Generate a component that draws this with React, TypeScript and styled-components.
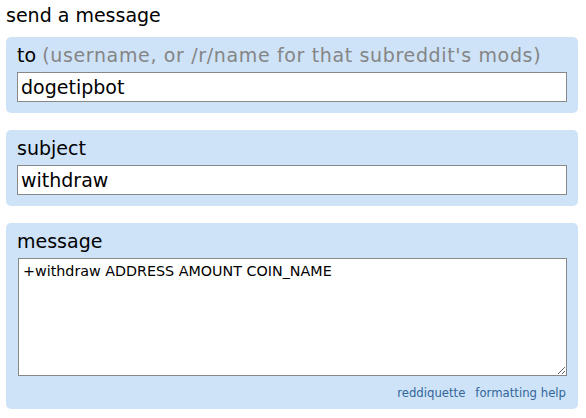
import React from "react";
import styled, { createGlobalStyle } from "styled-components";

const GlobalStyle = createGlobalStyle`
  html, body {
    margin: 0;
    padding: 0;
    background: #ffffff;
  }
  body {
    font-family: "DejaVu Sans", Verdana, sans-serif;
    color: #000;
  }
`;

const Page = styled.div`
  width: 572px;
  margin-left: 6px;
  padding-top: 4px;
  display: flex;
  flex-direction: column;
`;

const Title = styled.h1`
  margin: 0 0 10px 0;
  font-size: 19px;
  line-height: 23px;
  font-weight: normal;
  color: #000;
`;

const Form = styled.div`
  display: flex;
  flex-direction: column;
  gap: 17px;
`;

const RoundField = styled.div<{ $padBottom?: number }>`
  background: #cee3f8;
  border-radius: 5px;
  padding: 7px 12px ${(p) => p.$padBottom ?? 11}px 11px;
  display: flex;
  flex-direction: column;
`;

const FieldTitle = styled.div`
  font-size: 19px;
  line-height: 23px;
  margin-bottom: 5px;
  color: #000;
  white-space: nowrap;
`;

const Hint = styled.span`
  color: #858585;
  letter-spacing: 0.65px;
`;

const TextInput = styled.input`
  box-sizing: border-box;
  width: 550px;
  height: 30px;
  margin: 0;
  border: 1px solid #888888;
  padding: 0 3px;
  font-family: "DejaVu Sans", Verdana, sans-serif;
  font-size: 19px;
  color: #000;
  background: #fff;
  outline: none;
`;

const MessageArea = styled.textarea`
  box-sizing: border-box;
  width: 549px;
  height: 118px;
  margin: 0 0 0 1px;
  border: 1px solid #888888;
  padding: 4px 4px;
  font-family: "DejaVu Sans", Verdana, sans-serif;
  font-size: 14.3px;
  line-height: 16px;
  color: #000;
  background: #fff;
  outline: none;
  display: block;
`;

const LinkRow = styled.div`
  display: flex;
  justify-content: flex-end;
  gap: 10px;
  margin-top: 10px;
  font-size: 11.7px;
  line-height: 14px;
`;

const HelpLink = styled.a`
  color: #369;
  text-decoration: none;
`;

export default function App() {
  return (
    <>
      <GlobalStyle />
      <Page>
        <Title>send a message</Title>
        <Form>
          <RoundField>
            <FieldTitle>
              to <Hint>(username, or /r/name for that subreddit's mods)</Hint>
            </FieldTitle>
            <TextInput type="text" defaultValue="dogetipbot" />
          </RoundField>
          <RoundField>
            <FieldTitle>subject</FieldTitle>
            <TextInput type="text" defaultValue="withdraw" />
          </RoundField>
          <RoundField $padBottom={9}>
            <FieldTitle>message</FieldTitle>
            <MessageArea defaultValue="+withdraw ADDRESS AMOUNT COIN_NAME" />
            <LinkRow>
              <HelpLink href="#">reddiquette</HelpLink>
              <HelpLink href="#">formatting help</HelpLink>
            </LinkRow>
          </RoundField>
        </Form>
      </Page>
    </>
  );
}
